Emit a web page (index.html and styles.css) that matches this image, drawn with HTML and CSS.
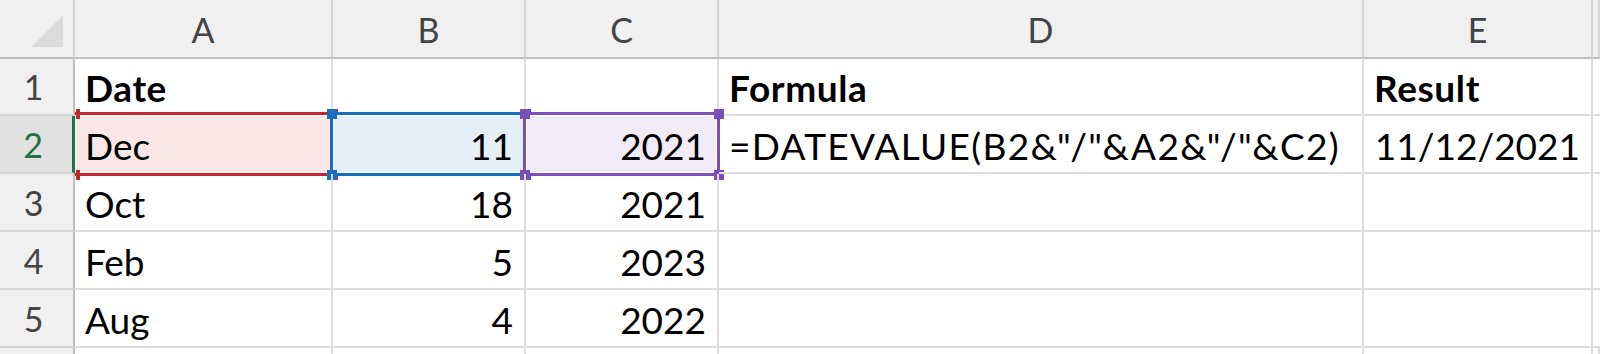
FILE: index.html
```html
<!DOCTYPE html>
<html lang="en">
  <head>
    <meta charset="UTF-8" />
    <title>DATEVALUE</title>
    <link rel="stylesheet" href="styles.css">
  </head>
  <body>
    <div class="sheet">
      <!-- column headers -->
      <div class="corner">
        <svg width="40" height="40" viewBox="0 0 40 40"><polygon points="36,4 36,36 4,36" fill="#dcdcdc" /></svg>
      </div>
      <div class="col-head">A</div>
      <div class="col-head">B</div>
      <div class="col-head">C</div>
      <div class="col-head">D</div>
      <div class="col-head">E</div>
      <div class="col-head"></div>

      <!-- row 1 -->
      <div class="row-head">1</div>
      <div class="cell bold">Date</div>
      <div class="cell"></div>
      <div class="cell"></div>
      <div class="cell bold">Formula</div>
      <div class="cell bold">Result</div>
      <div class="cell"></div>

      <!-- row 2 -->
      <div class="row-head active">2</div>
      <div class="cell ref-red">
        Dec
        <span class="ref no-left"><i class="h tr"></i><i class="h br"></i><i class="h tl"></i><i class="h bl"></i></span>
      </div>
      <div class="cell num ref-blue">
        11
        <span class="ref"><i class="h tl"></i><i class="h tr"></i><i class="h bl"></i><i class="h br"></i></span>
      </div>
      <div class="cell num ref-purple">
        2021
        <span class="ref"><i class="h tl"></i><i class="h tr"></i><i class="h bl"></i><i class="h br"></i></span>
      </div>
      <div class="cell formula">=DATEVALUE(B2&amp;"/"&amp;A2&amp;"/"&amp;C2)</div>
      <div class="cell num">11/12/2021</div>
      <div class="cell"></div>

      <!-- row 3 -->
      <div class="row-head">3</div>
      <div class="cell">Oct</div>
      <div class="cell num">18</div>
      <div class="cell num">2021</div>
      <div class="cell"></div>
      <div class="cell"></div>
      <div class="cell"></div>

      <!-- row 4 -->
      <div class="row-head">4</div>
      <div class="cell">Feb</div>
      <div class="cell num">5</div>
      <div class="cell num">2023</div>
      <div class="cell"></div>
      <div class="cell"></div>
      <div class="cell"></div>

      <!-- row 5 -->
      <div class="row-head">5</div>
      <div class="cell">Aug</div>
      <div class="cell num">4</div>
      <div class="cell num">2022</div>
      <div class="cell"></div>
      <div class="cell"></div>
      <div class="cell"></div>

      <!-- row 6, only the top edge shows -->
      <div class="row-head stub"></div>
      <div class="cell stub"></div>
      <div class="cell stub"></div>
      <div class="cell stub"></div>
      <div class="cell stub"></div>
      <div class="cell stub"></div>
      <div class="cell stub"></div>
    </div>
  </body>
</html>
```

FILE: styles.css
```css
html,
body {
  height: 354px;
}
body {
  margin: 0;
  padding: 0;
  background: #fff;
  font-family: Lato, "Liberation Sans", sans-serif;
  overflow: hidden;
}
.sheet {
  display: grid;
  grid-template-columns: 75px 258px 193px 193px 645px 229px 7px;
  grid-template-rows: 59px 57px 58px 58px 58px 58px 6px;
  width: 1600px;
  overflow: hidden;
}
.corner,
.col-head,
.row-head {
  background: #f0f0f0;
  color: #444;
  font-size: 34px;
  box-sizing: border-box;
}
.corner {
  display: flex;
  align-items: flex-end;
  justify-content: flex-end;
  padding: 0 6px 6px 0;
  border-right: 2px solid #d4d4d4;
  border-bottom: 2px solid #bfbfbf;
}
.col-head {
  display: flex;
  align-items: center;
  justify-content: center;
  border-right: 2px solid #d4d4d4;
  border-bottom: 2px solid #bfbfbf;
  padding-top: 2px;
}
.row-head {
  display: flex;
  align-items: center;
  justify-content: center;
  border-right: 2px solid #bfbfbf;
  border-bottom: 2px solid #d4d4d4;
  padding-right: 6px;
}
.row-head.active {
  background: #e1e1e1;
  color: #217346;
  border-right: 3px solid #217346;
}
.cell {
  position: relative;
  display: flex;
  align-items: center;
  padding: 2px 8px 0 10px;
  border-right: 2px solid #dedede;
  border-bottom: 2px solid #dedede;
  box-sizing: border-box;
  font-size: 37px;
  color: #000;
  white-space: nowrap;
}
.stub {
  border-bottom: none;
  padding: 0;
}
.cell.bold {
  font-weight: bold;
  letter-spacing: 0.6px;
}
.cell.formula {
  letter-spacing: 1.3px;
}
.cell.num {
  justify-content: flex-end;
  padding-right: 11px;
}

/* formula reference highlights */
.ref-red {
  background: #f9e6e6;
  --ref: #c3262e;
}
.ref-blue {
  background: #e4eff8;
  --ref: #1a6dc0;
}
.ref-purple {
  background: #f1ebf8;
  --ref: #7a4fb8;
}
.ref {
  position: absolute;
  left: -3px;
  right: -3px;
  top: -4px;
  bottom: -4px;
  border: 3px solid var(--ref);
  box-shadow: inset 0 0 0 1px #fff;
}
.ref.no-left {
  left: 0;
  border-left: none;
}
.ref .h {
  position: absolute;
  width: 10px;
  height: 10px;
  background: var(--ref);
}
.ref .tl { left: -6.5px; top: -6.5px; }
.ref .tr { right: -6.5px; top: -6.5px; }
.ref .bl { left: -6.5px; bottom: -6.5px; }
.ref .br { right: -6.5px; bottom: -6.5px; }
.ref.no-left .tl,
.ref.no-left .bl {
  left: 1px;
  width: 4px;
}
```
